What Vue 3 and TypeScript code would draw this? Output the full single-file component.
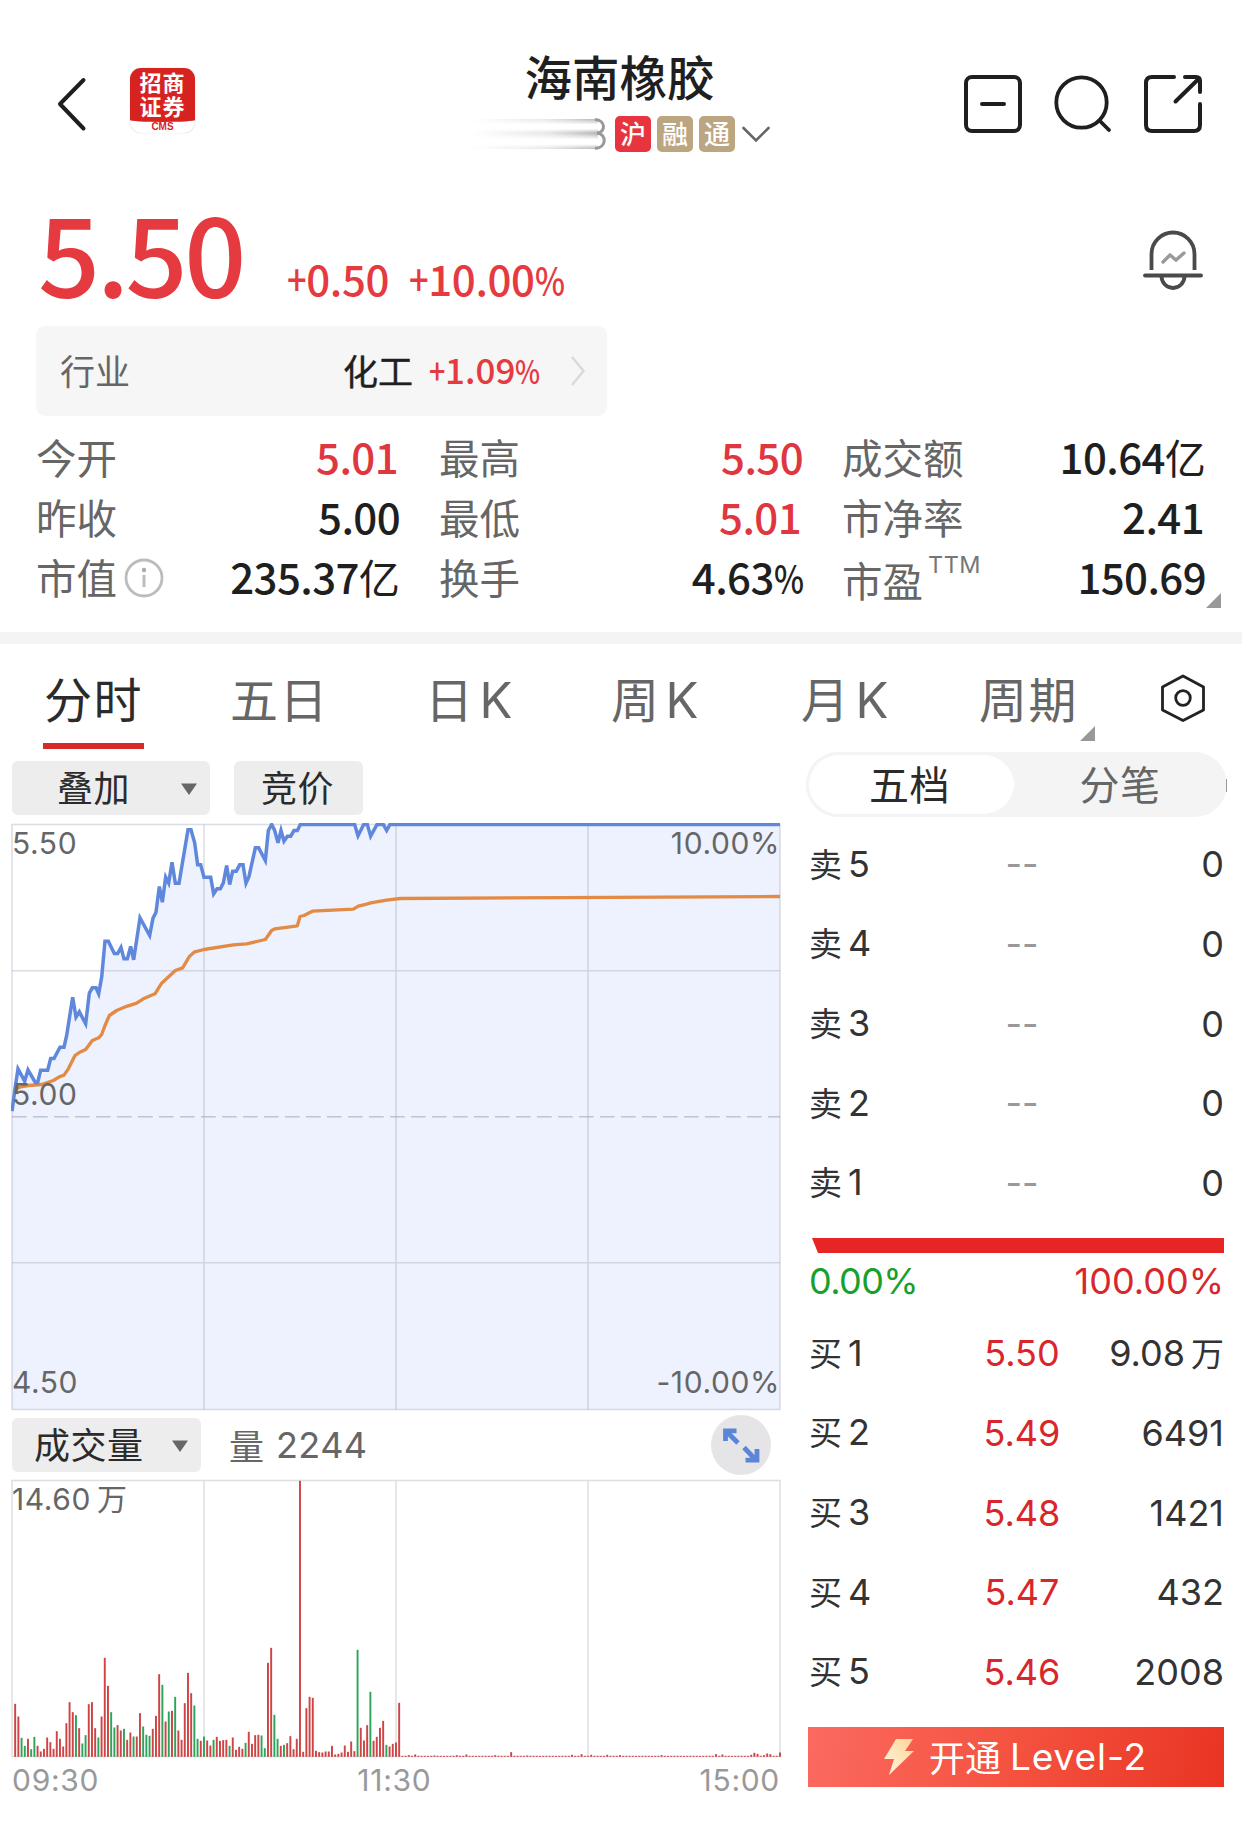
<script setup lang="ts">
interface Stat { label: string; value: string; up?: boolean; info?: boolean; sup?: string }
interface Level { side: string; n: number; price: string; qty: string; unit?: string }

const statColumns: Stat[][] = [
  [
    { label: '今开', value: '5.01', up: true },
    { label: '昨收', value: '5.00' },
    { label: '市值', value: '235.37亿', info: true },
  ],
  [
    { label: '最高', value: '5.50', up: true },
    { label: '最低', value: '5.01', up: true },
    { label: '换手', value: '4.63%' },
  ],
  [
    { label: '成交额', value: '10.64亿' },
    { label: '市净率', value: '2.41' },
    { label: '市盈', value: '150.69', sup: 'TTM' },
  ],
]

const sells: Level[] = [5, 4, 3, 2, 1].map((n) => ({ side: '卖', n, price: '--', qty: '0' }))
const buys: Level[] = [
  { side: '买', n: 1, price: '5.50', qty: '9.08', unit: '万' },
  { side: '买', n: 2, price: '5.49', qty: '6491' },
  { side: '买', n: 3, price: '5.48', qty: '1421' },
  { side: '买', n: 4, price: '5.47', qty: '432' },
  { side: '买', n: 5, price: '5.46', qty: '2008' },
]

// Splits a figure so that signs, percent marks and units can be sized apart from digits.
function parts(s: string): { t: string; c: string }[] {
  return (s.match(/[0-9.]+|[^0-9.]/g) ?? []).map((t) => ({
    t,
    c: t === '%' ? 'pct' : t === '+' ? 'sign' : t === '亿' ? 'unit' : 'digits',
  }))
}

const priceLine =
  '36,902 45,835 54,775 74,812 84,778 106,816 113,816 122,779 143,779 152,744 162,744 180,710 192,710 200,675 218,560 228,620 238,604 257,640 268,548 277,532 288,532 296,550 305,500 315,392 325,392 343,429 353,429 363,411 372,445 382,445 392,408 401,448 420,322 449,375 459,323 468,305 478,228 487,275 497,200 506,218 516,155 526,218 537,218 564,58 573,58 584,97 593,163 602,163 612,200 632,200 641,250 651,235 661,235 670,217 680,165 689,222 698,182 709,182 719,163 729,163 738,218 747,198 766,112 776,112 796,150 805,60 815,42 824,60 834,97 843,60 852,92 862,77 872,77 882,60 892,60 901,42 1064,42 1074,76 1091,42 1102,42 1112,77 1131,42 1150,42 1160,60 1170,42 2340,42'
const averageLine =
  '45,840 54,832 66,828 85,825 125,822 160,810 178,799 192,794 205,775 225,735 238,726 257,717 277,690 296,682 305,672 315,645 328,615 350,600 373,590 410,578 430,565 465,550 485,518 526,480 548,472 568,438 584,424 612,417 700,403 740,400 796,387 815,360 825,355 892,346 900,318 912,315 937,302 1060,296 1075,287 1100,281 1112,277 1160,269 1200,264 2340,258'

// Minute volumes; a trailing g marks a falling minute.
const volumes =
  '159 121 57g 33g 54 23g 60g 33 16 24 58 44 24 77 54 31 101 164 134 125g 86 40g 65g 158 164 86 58g 121 297 213 134g 88g 95 79 84g 51 73 61g 61 131 91g 66g 63g 84 123 248 216g 106 136g 138 180g 79 51 161 252 191 154g 54g 48 61g 49 34 51g 60 48 50 51 33g 58 21 30 24 42g 75 39 65 66 64g 26g 282 327 126g 54g 33 36g 41 62 23 54 828 15 146 180 177 18 14 13 16 16 33 7 9 13 34 15 46 17 321g 87 49 95 195g 48 60 87 108 36g 31 39 43 162'
// Once the price sits at the limit, only these minutes rise above the floor.
const lateSpikes: Record<number, number> = {
  123: 5, 125: 7, 131: 4, 138: 5, 141: 7, 150: 5, 155: 14, 160: 4, 174: 6, 177: 8, 180: 6, 185: 6, 189: 5, 202: 5,
  219: 8, 221: 7, 230: 6, 231: 12, 232: 9, 234: 5, 235: 10, 236: 8, 239: 13,
}
const morning = volumes.split(' ')
const bars = Array.from({ length: 240 }, (_, i) => {
  const v = morning[i] ?? String(lateSpikes[i] ?? 3)
  return { x: 42.6 + 9.6 * i, h: parseInt(v), c: v.endsWith('g') ? '#2fa55c' : '#cf4444' }
})
</script>

<template>
  <div class="page">
    <header class="head">
      <svg class="back" width="32" height="56" viewBox="0 0 32 56"><path d="M28.500 4 5 28 28.500 52.500" fill="none" stroke="#1f1f1f" stroke-width="4" stroke-linecap="round" stroke-linejoin="round" /></svg>
      <div class="logo">
        <div class="logo-red"><span>招商</span><span>证券</span></div>
        <span class="cms">CMS</span>
      </div>
      <div class="title">
        <h1>海南橡胶</h1>
        <div class="tags">
          <svg class="code" width="136" height="36" viewBox="0 0 136 36">
            <defs>
              <linearGradient id="trail" x1="0" x2="1"><stop offset="0" stop-color="#999" stop-opacity="0" /><stop offset="0.6" stop-color="#999" stop-opacity=".28" /><stop offset="1" stop-color="#888" stop-opacity=".75" /></linearGradient>
              <linearGradient id="band" x1="0" x2="0" y1="0" y2="1"><stop offset="0" stop-color="#fff" stop-opacity="0.15" /><stop offset=".4" stop-color="#fff" /><stop offset=".7" stop-color="#fff" /><stop offset="1" stop-color="#fff" stop-opacity="0.15" /></linearGradient>
            </defs>
            <rect x="0" y="3" width="127" height="30" fill="url(#trail)" />
            <rect x="0" y="3" width="127" height="14" fill="url(#band)" />
            <rect x="0" y="17" width="127" height="16" fill="url(#band)" />
            <path d="M124 3.500C135 4 135 16.500 126 17 136 18 136 32 124 32.500" fill="none" stroke="#999" stroke-width="3" />
          </svg>
          <span class="tag hu">沪</span><span class="tag">融</span><span class="tag">通</span>
          <svg width="30" height="18" viewBox="0 0 30 18"><path d="M2.500 3 15 15.500 27.500 3" fill="none" stroke="#666" stroke-width="2.600" stroke-linecap="round" /></svg>
        </div>
      </div>
      <div class="actions">
        <svg width="60" height="60" viewBox="0 0 60 60" fill="none" stroke="#1f1f1f" stroke-width="4" stroke-linecap="round"><rect x="3" y="3" width="54" height="54" rx="6" /><path d="M19 30H41" /></svg>
        <svg width="60" height="60" viewBox="0 0 60 60" fill="none" stroke="#1f1f1f" stroke-width="3.800" stroke-linecap="round"><circle cx="28.500" cy="28.500" r="25.200" /><path d="M46.500 46.500 56 56" /></svg>
        <svg width="60" height="60" viewBox="0 0 60 60" fill="none" stroke="#1f1f1f" stroke-width="4" stroke-linecap="round"><path d="M31 3H9Q3 3 3 9V51Q3 57 9 57H51Q57 57 57 51V30M42 3H53Q57 3 57 7V18M32.500 27.500 56 4.500" /></svg>
      </div>
    </header>

    <section class="quote">
      <div class="price">5.50</div>
      <div class="change"><span v-for="(p, i) in parts('+0.50')" :key="i" :class="p.c">{{ p.t }}</span></div>
      <div class="change"><span v-for="(p, i) in parts('+10.00%')" :key="i" :class="p.c">{{ p.t }}</span></div>
      <svg class="bell" width="64" height="64" viewBox="0 0 64 64" fill="none" stroke="#4a4a4a" stroke-width="3.800">
        <path d="M10.500 42V26a21.500 21.500 0 0 1 43 0V42" /><path d="M4 47.500H60" stroke-linecap="round" /><path d="M20.500 48a11.500 12 0 0 0 23 0" />
        <path d="M22 34 29 27 35 32 43 25" stroke="#999" stroke-width="3.400" stroke-linecap="round" />
      </svg>
    </section>

    <section class="industry">
      <span class="ind-label">行业</span>
      <span class="ind-name">化工</span>
      <span class="ind-pct"><span v-for="(p, i) in parts('+1.09%')" :key="i" :class="p.c">{{ p.t }}</span></span>
      <svg width="16" height="32" viewBox="0 0 16 32"><path d="M2 2 13.500 16 2 30" fill="none" stroke="#d9d9d9" stroke-width="2.400" /></svg>
    </section>

    <section class="stats">
      <div v-for="(col, c) in statColumns" :key="c" class="stat-col">
        <div v-for="s in col" :key="s.label" class="stat">
          <span class="stat-label" :class="{ low: s.sup }">{{ s.label }}</span>
          <span v-if="s.sup" class="sup">{{ s.sup }}</span>
          <svg v-if="s.info" class="info" width="42" height="42" viewBox="0 0 42 42"><circle cx="21" cy="21" r="18" fill="none" stroke="#bcbcbc" stroke-width="2.800" /><circle cx="21" cy="13" r="2.200" fill="#aaa" /><path d="M21 18V30" stroke="#bcbcbc" stroke-width="3" /></svg>
          <span class="stat-value" :class="{ up: s.up, one: s.value.endsWith('1') }"><span v-for="(p, i) in parts(s.value)" :key="i" :class="p.c">{{ p.t }}</span></span>
        </div>
      </div>
      <i class="corner stats-corner"></i>
    </section>

    <nav class="tabs">
      <span class="tab t1 on">分时</span>
      <span class="tab t2">五日</span>
      <span class="tab t3">日<b>K</b></span>
      <span class="tab t4">周<b>K</b></span>
      <span class="tab t5">月<b>K</b></span>
      <span class="tab t6">周期<i class="corner"></i></span>
      <svg class="hex" width="46" height="50" viewBox="0 0 46 50" fill="none" stroke="#222" stroke-width="2.800" stroke-linejoin="round"><path d="M23 3 43.500 14V37L23 47.500 2.500 37V14Z" /><circle cx="23" cy="25" r="7.300" /></svg>
    </nav>

    <main class="body">
      <div class="left">
        <div class="tools">
          <span class="btn overlay">叠加<svg width="18" height="12" viewBox="0 0 18 12"><path d="M1 0.500H17L9 12Z" fill="#666" /></svg></span>
          <span class="btn auction">竞价</span>
        </div>
        <div class="chart">
          <svg width="771" height="588" viewBox="33 37.500 2313 1764">
            <polygon :points="`36,1797 ${priceLine} 2340,1797`" fill="#edf2fe" />
            <g fill="none" stroke="#a0a5b8" stroke-opacity=".38" stroke-width="4.500">
              <rect x="36" y="42" width="2304" height="1755" />
              <path d="M612 42V1797M1188 42V1797M1764 42V1797M36 481H2340M36 1357H2340" />
              <path d="M36 919H2340" stroke-dasharray="44 19" stroke-opacity=".6" />
            </g>
            <polyline :points="averageLine" fill="none" stroke="#e38a45" stroke-width="10" stroke-linejoin="round" />
            <polyline :points="priceLine" fill="none" stroke="#5f87dc" stroke-width="10.500" />
          </svg>
          <span class="mark tl">5.50</span><span class="mark tr">10.00%</span>
          <span class="mark ml">5.00</span>
          <span class="mark bl">4.50</span><span class="mark br">-10.00%</span>
        </div>
        <div class="vol-head">
          <span class="btn volume">成交量<svg width="18" height="12" viewBox="0 0 18 12"><path d="M1 0.500H17L9 12Z" fill="#666" /></svg></span>
          <span class="vol-now">量<em>2244</em></span>
          <svg class="expand" width="60" height="60" viewBox="0 0 60 60"><circle cx="30" cy="30" r="30" fill="#e5e5e7" /><g fill="none" stroke="#5b86d8" stroke-width="4.800"><path d="M14.500 26V15.800H25.500M15 16 27 28M46 34V45.200H34.500M45 45 33 32.500" /></g></svg>
        </div>
        <div class="chart vol">
          <svg width="771" height="279" viewBox="33 358.500 2313 837">
            <g fill="none" stroke="#dedfe2" stroke-width="4.500"><rect x="36" y="363" width="2304" height="828" /><path d="M612 363V1191M1188 363V1191M1764 363V1191" /></g>
            <rect v-for="(b, i) in bars" :key="i" :x="b.x" :y="1192 - b.h" width="5.800" :height="b.h" :fill="b.c" />
          </svg>
          <span class="mark vl">14.60<small>万</small></span>
        </div>
        <div class="axis"><span>09:30</span><span>11:30</span><span>15:00</span></div>
      </div>

      <aside class="book">
        <div class="seg"><span class="seg-item on">五档</span><span class="seg-item">分笔</span><i class="seg-edge"></i></div>
        <div class="levels">
          <div v-for="l in sells" :key="l.n" class="level"><span class="lv">{{ l.side }}<em>{{ l.n }}</em></span><span class="px none">{{ l.price }}</span><span class="qty">{{ l.qty }}</span></div>
        </div>
        <div class="ratio"></div>
        <div class="ratio-text"><span class="green">0.00%</span><span class="red">100.00%</span></div>
        <div class="levels">
          <div v-for="l in buys" :key="l.n" class="level"><span class="lv">{{ l.side }}<em>{{ l.n }}</em></span><span class="px">{{ l.price }}</span><span class="qty">{{ l.qty }}<small v-if="l.unit">{{ l.unit }}</small></span></div>
        </div>
        <div class="cta">
          <svg width="32" height="38" viewBox="0 0 32 38"><defs><linearGradient id="bolt" x1="0" x2="1" y1="1" y2="0"><stop offset="0" stop-color="#fff6e4" /><stop offset="1" stop-color="#fdd596" /></linearGradient></defs><path d="M13 1H30L22 13H31L6 37 11 21H1Z" fill="url(#bolt)" /></svg>
          <span class="cta-cn">开通</span><span class="cta-en">Level-2</span>
        </div>
      </aside>
    </main>
  </div>
</template>

<style>
body { margin: 0; background: #fff; }
</style>

<style scoped>
.page { width: 1242px; height: 1821px; overflow: hidden; background: #fff; color: #222; font-family: "Noto Sans CJK SC", sans-serif; display: flex; flex-direction: column; }
.page * { box-sizing: border-box; }
svg { display: block; flex: none; }
em, i { font-style: normal; }

.head { height: 178px; position: relative; display: flex; align-items: flex-start; flex: none; }
.back { margin: 76px 0 0 55px; }
.logo { margin: 68px 0 0 43px; width: 65px; height: 65px; border-radius: 11px; background: #fff; box-shadow: 0 0 1px #aaa; text-align: center; }
.logo-red { height: 54px; background: #d7231f; color: #fff; font: 700 22px/24px "Liberation Sans", "Noto Sans CJK SC", sans-serif; display: flex; flex-direction: column; padding-top: 4px; border-radius: 11px 11px 50% 50% / 11px 11px 2px 2px; letter-spacing: 1px; }
.logo-red span { height: 24px; }
.cms { display: block; font: 700 10px/10px "Liberation Sans", sans-serif; color: #d7231f; }
.title { position: absolute; left: 420px; top: 41px; width: 401px; }
h1 { margin: 0 0 0 -2px; font-size: 47.500px; line-height: 70px; font-weight: 500; text-align: center; color: #1f1f1f; }
.tags { display: flex; align-items: center; gap: 6px; margin: 5px 0 0 51px; height: 36px; }
.code { margin-right: 2px; }
.tag { width: 36px; height: 36px; border-radius: 5px; background: #bca581; color: #fff; font-size: 26px; font-weight: 500; line-height: 34px; text-align: center; }
.hu { background: #e8343e; }
.actions { position: absolute; right: 39px; top: 74px; display: flex; gap: 30px; }

.quote { height: 148px; display: flex; color: #e53a40; font-weight: 500; flex: none; padding-left: 38px; }
.price { font-size: 109px; line-height: 144px; width: 249px; letter-spacing: -3.500px; }
.change { font-size: 42px; line-height: 60px; margin-top: 70px; width: 122px; display: flex; align-items: baseline; letter-spacing: -.4px; }
.sign { display: inline-block; width: .46em; transform: scaleX(.82); transform-origin: left; }
.pct { display: inline-block; font-size: .94em; width: .74em; transform: scaleX(.81); transform-origin: left; letter-spacing: 0; }
.unit { font-weight: 400; font-size: .98em; letter-spacing: 0; }
.bell { margin: 50px 37px 0 auto; }

.industry { margin-left: 36px; width: 571px; height: 90px; background: #f6f6f6; border-radius: 9px; display: flex; align-items: center; flex: none; font-size: 35px; line-height: 60px; padding: 0 21px 0 24px; }
.industry > span { position: relative; top: -1px; }
.industry > .ind-pct { top: -2px; }
.ind-label { color: #666; flex: 1; }
.ind-name { color: #1f1f1f; margin-right: 16px; -webkit-text-stroke: .4px #1f1f1f; }
.ind-pct { color: #e53a40; font-weight: 500; margin-right: 25px; display: flex; align-items: baseline; width: 116px; }

.stats { height: 216px; padding: 10px 36px 0 36px; display: flex; gap: 39px; position: relative; flex: none; font-size: 40.500px; }
.stat-col { flex: 1; display: flex; flex-direction: column; }
.stat { height: 60px; line-height: 60px; display: flex; align-items: flex-start; }
.stat-label { color: #666; position: relative; top: 1px; }
.low { top: 4px; }
.sup { font: 400 23.500px/28px Inter, sans-serif; color: #777; margin: 5px 0 0 5px; letter-spacing: .5px; }
.info { margin: 11px 0 0 6px; }
.stat-value { margin-left: auto; font-size: 42px; font-weight: 500; letter-spacing: -.6px; color: #1f1f1f; display: flex; align-items: baseline; white-space: nowrap; }
.one { margin-right: 2px; }
.up { color: #e0363f; }
.corner { position: absolute; width: 15px; height: 15px; background: #999; clip-path: polygon(100% 0, 100% 100%, 0 100%); }
.stats-corner { right: 21px; bottom: 24px; }

.tabs { height: 117px; border-top: 12px solid #f4f4f4; display: flex; align-items: flex-start; position: relative; flex: none; padding-left: 43px; font-size: 48px; color: #666; }
.tab { position: relative; height: 105px; line-height: 106px; letter-spacing: 1.500px; padding-left: 1px; white-space: nowrap; flex: none; }
.tab b { font: 400 49px/1 Inter, sans-serif; margin-left: 5px; }
.on { color: #2b2b2b; }
.tab.on::after { content: ""; position: absolute; left: 0; bottom: 0; width: 101px; height: 6px; background: #d62b27; }
.t1 { width: 186px; } .t2 { width: 195px; } .t3 { width: 186px; } .t4 { width: 190px; } .t5 { width: 178px; } .t6 { width: 182px; }
.tab .corner { left: 102px; top: 82px; }
.hex { margin-top: 29px; }

.body { display: flex; flex: 1; min-height: 0; }
.left { width: 806px; padding-left: 12px; flex: none; }
.tools { display: flex; gap: 24px; padding-top: 12px; height: 75px; }
.btn { height: 54px; background: #ededed; border-radius: 6px; font-size: 36px; line-height: 51.500px; color: #2b2b2b; display: flex; align-items: flex-start; letter-spacing: .5px; }
.btn svg { margin-top: 22px; }
.overlay { width: 198px; padding-left: 45px; }
.btn.overlay svg { margin-left: 50px; }
.auction { width: 129px; padding-left: 27px; }
.chart { position: relative; height: 586px; width: 768px; }
.chart svg { margin: -1.500px 0 0 -1px; }
.mark { position: absolute; font: 400 30px/30px Inter, "Noto Sans CJK SC", sans-serif; color: #666; letter-spacing: .6px; }
.mark small { font-size: 30px; margin-left: 6px; }
.tl { left: 0; top: 5px; } .tr { right: 0; top: 5px; }
.ml { left: 0; top: 256px; }
.bl { left: 0; top: 544px; } .br { right: 0; top: 544px; }
.vl { left: 0; top: 5px; }
.vol-head { height: 72px; padding-top: 9px; display: flex; position: relative; }
.volume { width: 189px; padding-left: 22px; }
.btn.volume svg { margin-left: 27px; }
.vol-now { margin-left: 28px; font-size: 35px; line-height: 53px; color: #666; display: flex; }
.vol-now em { font: 400 36px/55px Inter, sans-serif; margin-left: 12px; letter-spacing: .4px; }
.expand { position: absolute; right: 35px; top: 6px; }
.vol { height: 276px; }
.axis { display: flex; justify-content: space-between; width: 768px; padding-right: 0; font: 400 30px/30px Inter, sans-serif; color: #999; margin-top: 10px; letter-spacing: .7px; }
.axis span:nth-child(2) { position: relative; left: -5px; }

.book { width: 421px; flex: none; padding-top: 3px; }
.seg { height: 65px; width: 421px; border-radius: 33px; background: #f4f4f4; display: flex; position: relative; }
.seg-edge { position: absolute; right: 0; top: 27px; width: 1px; height: 13px; background: #999; }
.seg-item { flex: 1; font-size: 40px; line-height: 62px; text-align: center; color: #666; letter-spacing: .5px; padding-right: 2px; }
.seg-item.on { flex: 0 0 209px; background: #fff; border: 3px solid #f4f4f4; border-right-width: 1px; border-radius: 33px; line-height: 56px; color: #2b2b2b; padding-right: 4px; }
.levels { padding: 0 3px 0 3px; }
.level { height: 79.650px; display: flex; align-items: center; font: 400 36px/80px Inter, "Noto Sans CJK SC", sans-serif; color: #333; }
.lv { width: 170px; font-size: 33px; }
.lv em { font-size: 36px; margin-left: 6px; }
.px { color: #d8262c; width: 86px; text-align: center; }
.px.none { color: #999; }
.qty { margin-left: auto; }
.qty small { font-size: 33px; margin-left: 6px; }
.seg + .levels { padding-top: 7.500px; height: 421px; }
.ratio { margin: 0 3px 0 6px; height: 15px; background: #e82525; clip-path: polygon(0 0, 100% 0, 100% 100%, 6px 100%); }
.ratio-text { display: flex; justify-content: space-between; padding: 10px 3px 0 3px; font: 400 36px/36px Inter, sans-serif; letter-spacing: -.6px; height: 60.500px; }
.red { letter-spacing: 0; }
.green { color: #18a02c; } .red { color: #d8262c; }
.cta { margin: 15.500px 3px 0 2px; height: 60px; background: linear-gradient(100deg, #fb6a60 0%, #f4523f 50%, #e93423 100%); color: #fff; display: flex; align-items: center; padding-left: 75px; }
.cta-cn { font-size: 36px; line-height: 54px; margin-left: 14px; position: relative; top: -1px; }
.cta-en { font: 400 37px/60px Inter, sans-serif; margin-left: 9px; letter-spacing: .9px; }
</style>
